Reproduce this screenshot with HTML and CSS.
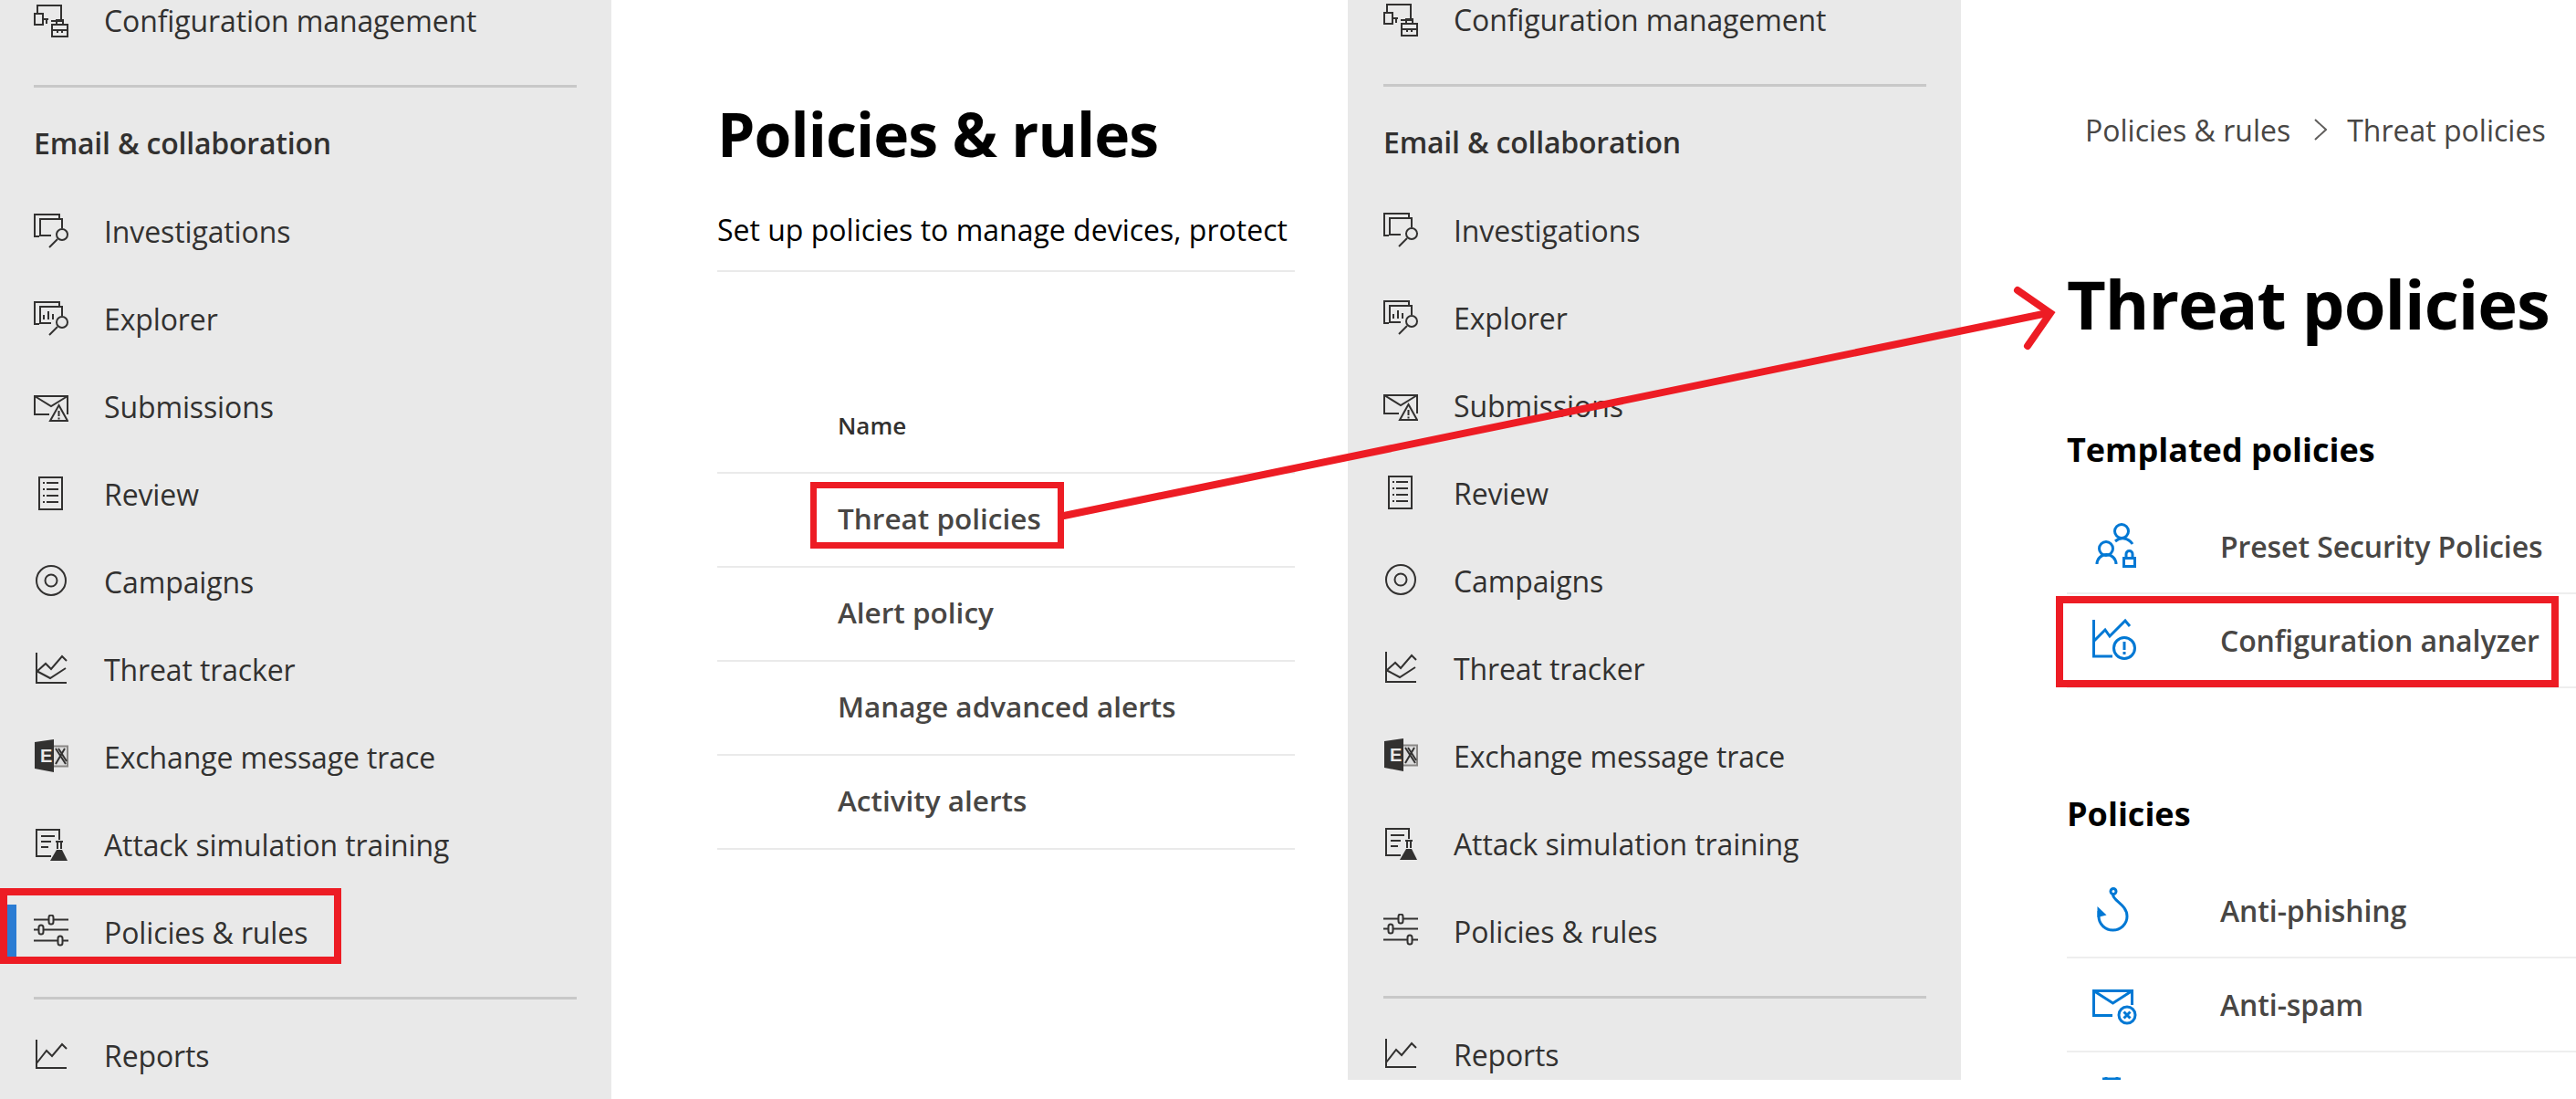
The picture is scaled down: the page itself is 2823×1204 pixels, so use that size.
FILE: index.html
```html
<!DOCTYPE html>
<html lang="en">
  <head>
    <meta charset="UTF-8" />
    <title>Policies &amp; rules - Threat policies</title>
    <link rel="stylesheet" href="styles.css">
  </head>
  <body>
    <!-- shared nav icons -->
    <svg class="icon-defs" aria-hidden="true">
      <symbol id="i-config" viewBox="0 0 38 40">
        <path d="M4 11V3h26v17H19" />
        <path d="M1 12h9v12H1zM10 18h6M14 18v5" />
        <path d="M20 24h17v13H20zM25 24v-5h7v5M20 30h17M26 30v3M31 30v3" />
      </symbol>
      <symbol id="i-investigations" viewBox="0 0 38 40">
        <path d="M6 25H1V1h27v5" />
        <path d="M19 24H7V6h24v10" />
        <circle cx="31" cy="23" r="6" />
        <path d="M26 28l-9 9" />
      </symbol>
      <symbol id="i-explorer" viewBox="0 0 38 40">
        <path d="M6 25H1V1h27v5" />
        <path d="M19 24H7V6h24v10" />
        <path d="M11 20v-5M16 20v-9M21 20v-6" />
        <circle cx="31" cy="23" r="6" />
        <path d="M26 28l-9 9" />
      </symbol>
      <symbol id="i-submissions" viewBox="0 0 38 40">
        <path d="M17 28H1V8h36v20" />
        <path d="M1 8l18 11L37 8" />
        <path class="knockout" d="M27.5 18L37 35H18z" />
        <path d="M27.5 24v6M27.5 31.500v2" />
      </symbol>
      <symbol id="i-review" viewBox="0 0 38 40">
        <path d="M6 1h25v35H6z" />
        <path d="M10 7h2M14 7h13M10 14h2M14 14h13M10 21h2M14 21h13M10 28h2M14 28h13" />
      </symbol>
      <symbol id="i-campaigns" viewBox="0 0 38 40">
        <circle cx="19" cy="18" r="16" />
        <circle cx="19" cy="18" r="6.500" />
      </symbol>
      <symbol id="i-tracker" viewBox="0 0 38 40">
        <path d="M3 1v33h33" />
        <path d="M3 22l10-9 6 6L31 5l5 5" />
        <path d="M3 21l15 8 17-11" />
      </symbol>
      <symbol id="i-exchange" viewBox="0 0 38 40">
        <path class="box" d="M21 7.500h16v22H21z" />
        <path d="M24 10l11 17M34 10L24 27M27 10l9 14" />
        <path class="solid" d="M1 3l21-3v36l-21-4z" />
      </symbol>
      <symbol id="i-attack" viewBox="0 0 38 40">
        <path d="M19 32H3V3h25v11" />
        <path d="M8 10h15M8 16h11M8 22h8" />
        <path d="M24 16h8M26 16v8M30 16v8" />
        <path class="solid" d="M25 25h6l6 12H18z" />
      </symbol>
      <symbol id="i-policies" viewBox="0 0 38 40">
        <path d="M0 5.500h38M0 16.500h38M0 28.500h38" />
        <rect class="knockout" x="16.500" y="0.500" width="5" height="10" rx="2.500" />
        <rect class="knockout" x="5.500" y="11.500" width="5" height="10" rx="2.500" />
        <rect class="knockout" x="26.500" y="23.500" width="5" height="10" rx="2.500" />
      </symbol>
      <symbol id="i-reports" viewBox="0 0 38 40">
        <path d="M3 2v31h33" />
        <path d="M3 28l11-14 6 6L31 7l5 5" />
      </symbol>
    </svg>

    <div class="page">
      <!-- first shot -->
      <div class="shot shot-first">
        <nav class="sidebar">
          <div class="nav-row nav-row-top"><svg class="nav-icon"><use href="#i-config" /></svg>Configuration management</div>
          <div class="nav-divider"></div>
          <div class="nav-section">Email &amp; collaboration</div>
          <div class="nav-row"><svg class="nav-icon"><use href="#i-investigations" /></svg>Investigations</div>
          <div class="nav-row"><svg class="nav-icon"><use href="#i-explorer" /></svg>Explorer</div>
          <div class="nav-row"><svg class="nav-icon"><use href="#i-submissions" /></svg>Submissions</div>
          <div class="nav-row"><svg class="nav-icon"><use href="#i-review" /></svg>Review</div>
          <div class="nav-row"><svg class="nav-icon"><use href="#i-campaigns" /></svg>Campaigns</div>
          <div class="nav-row"><svg class="nav-icon"><use href="#i-tracker" /></svg>Threat tracker</div>
          <div class="nav-row"><svg class="nav-icon"><use href="#i-exchange" /><text class="exchange-e" x="7" y="25">E</text></svg>Exchange message trace</div>
          <div class="nav-row"><svg class="nav-icon"><use href="#i-attack" /></svg>Attack simulation training</div>
          <div class="nav-row nav-row-active"><svg class="nav-icon"><use href="#i-policies" /></svg>Policies &amp; rules</div>
          <div class="nav-divider nav-divider-low"></div>
          <div class="nav-row nav-row-last"><svg class="nav-icon"><use href="#i-reports" /></svg>Reports</div>
        </nav>
        <main class="rules">
          <h1 class="rules-title">Policies &amp; rules</h1>
          <p class="rules-desc">Set up policies to manage devices, protect</p>
          <div class="rules-head">Name</div>
          <div class="rules-row">Threat policies</div>
          <div class="rules-row">Alert policy</div>
          <div class="rules-row">Manage advanced alerts</div>
          <div class="rules-row">Activity alerts</div>
        </main>
      </div>

      <!-- second shot -->
      <div class="shot shot-second">
        <nav class="sidebar">
          <div class="nav-row nav-row-top"><svg class="nav-icon"><use href="#i-config" /></svg>Configuration management</div>
          <div class="nav-divider"></div>
          <div class="nav-section">Email &amp; collaboration</div>
          <div class="nav-row"><svg class="nav-icon"><use href="#i-investigations" /></svg>Investigations</div>
          <div class="nav-row"><svg class="nav-icon"><use href="#i-explorer" /></svg>Explorer</div>
          <div class="nav-row"><svg class="nav-icon"><use href="#i-submissions" /></svg>Submissions</div>
          <div class="nav-row"><svg class="nav-icon"><use href="#i-review" /></svg>Review</div>
          <div class="nav-row"><svg class="nav-icon"><use href="#i-campaigns" /></svg>Campaigns</div>
          <div class="nav-row"><svg class="nav-icon"><use href="#i-tracker" /></svg>Threat tracker</div>
          <div class="nav-row"><svg class="nav-icon"><use href="#i-exchange" /><text class="exchange-e" x="7" y="25">E</text></svg>Exchange message trace</div>
          <div class="nav-row"><svg class="nav-icon"><use href="#i-attack" /></svg>Attack simulation training</div>
          <div class="nav-row"><svg class="nav-icon"><use href="#i-policies" /></svg>Policies &amp; rules</div>
          <div class="nav-divider nav-divider-low"></div>
          <div class="nav-row nav-row-last"><svg class="nav-icon"><use href="#i-reports" /></svg>Reports</div>
        </nav>
        <main class="threats">
          <div class="crumbs">
            <span>Policies &amp; rules</span>
            <svg class="crumb-sep" viewBox="0 0 14 24"><path d="M1 1l12 11L1 23" /></svg>
            <span>Threat policies</span>
          </div>
          <h1 class="threats-title">Threat policies</h1>

          <h2 class="group-title">Templated policies</h2>
          <div class="policy-row">
            <svg class="policy-icon" viewBox="0 0 50 52">
              <circle cx="32" cy="9" r="7.500" />
              <path d="M25 20c6-5 14-4 19 3" />
              <circle cx="15" cy="28" r="7.500" />
              <path d="M5 45a10.500 10.500 0 0 1 21 0" />
              <path d="M34.500 38.500h12v9h-12zM37 38v-4a3.500 3.500 0 0 1 7 0v4" />
            </svg>
            Preset Security Policies
          </div>
          <div class="policy-row">
            <svg class="policy-icon" viewBox="0 0 50 52">
              <path d="M1.500 3v40H22" />
              <path d="M2 26l12-12 5 7L36 4l5 6" />
              <circle cx="35" cy="34" r="11.500" />
              <path d="M35 27v9M35 38v3" />
            </svg>
            Configuration analyzer
          </div>

          <h2 class="group-title group-title-policies">Policies</h2>
          <div class="policy-row">
            <svg class="policy-icon" viewBox="0 0 50 52">
              <circle cx="23" cy="4.500" r="3" />
              <path d="M22.500 8c0 7 15.500 11 15.500 24a15.500 15 0 0 1-31 0v-6" />
              <path class="fill" d="M5.500 21v12l10-2.500z" />
            </svg>
            Anti-phishing
          </div>
          <div class="policy-row">
            <svg class="policy-icon" viewBox="0 0 50 52">
              <path d="M22 37.500H1.500v-27h42V26" />
              <path d="M1.500 10.500l21 13.500 21-13.500" />
              <circle class="blank" cx="38" cy="37" r="9" />
              <path d="M34.500 33.500l7 7M41.500 33.500l-7 7" />
            </svg>
            Anti-spam
          </div>
          <div class="policy-row">
            <svg class="policy-icon" viewBox="0 0 50 52">
              <path d="M11 4h20M15 2v3M27 2v3" />
            </svg>
          </div>
        </main>
      </div>

      <!-- red annotations drawn over the shots -->
      <div class="mark mark-nav"></div>
      <div class="mark mark-threat"></div>
      <div class="mark mark-analyzer"></div>
      <svg class="arrow" viewBox="0 0 2823 1204">
        <path d="M1166 565L2244 343" />
        <path d="M2211 318l36 25-25 36" />
      </svg>
    </div>
  </body>
</html>
```

FILE: styles.css
```css
html,
body {
  margin: 0;
  background: #ffffff;
}
.icon-defs {
  position: absolute;
  width: 0;
  height: 0;
}
.page {
  position: relative;
  width: 2823px;
  height: 1204px;
  overflow: hidden;
  display: flex;
  font-family: "Open Sans", "Noto Sans", sans-serif;
  color: #323130;
}
.shot {
  display: flex;
  height: 1183px;
  overflow: hidden;
}
.shot-first {
  width: 1477px;
  height: 1204px;
}
.shot-second {
  width: 1346px;
}

/* sidebar */
.sidebar {
  box-sizing: border-box;
  width: 670px;
  flex: none;
  background: #e9e9e9;
  padding-left: 37px;
  padding-right: 38px;
}
.shot-second .sidebar {
  width: 672px;
  padding-left: 39px;
  padding-right: 38px;
  margin-top: -1px;
}
.nav-row {
  box-sizing: border-box;
  display: flex;
  align-items: center;
  height: 96px;
  padding-bottom: 2px;
  font-size: 32px;
  letter-spacing: -0.12px;
  white-space: nowrap;
}
.nav-row-top {
  margin-top: -25px;
}
.nav-row-active {
  position: relative;
}
.nav-row-active::before {
  content: "";
  position: absolute;
  left: -29px;
  top: 17px;
  width: 10px;
  height: 58px;
  background: #2b7cd3;
}
.nav-icon {
  flex: none;
  width: 38px;
  height: 40px;
  margin-top: 2px;
  margin-right: 39px;
  fill: none;
  stroke: #323130;
  stroke-width: 2;
  overflow: visible;
}
.knockout {
  fill: #e9e9e9;
}
.solid {
  fill: #323130;
  stroke: none;
}
.box {
  fill: #dddddd;
  stroke: #8a8886;
}
.exchange-e {
  fill: #e9e9e9;
  stroke: none;
  font-family: "Liberation Sans", sans-serif;
  font-weight: 700;
  font-size: 20px;
  letter-spacing: 0;
}
.nav-divider {
  height: 3px;
  margin-top: 22px;
  background: #c8c8c8;
}
.nav-section {
  display: flex;
  align-items: center;
  height: 48px;
  margin-top: 36px;
  margin-bottom: 26px;
  font-size: 32px;
  font-weight: 600;
  letter-spacing: -0.2px;
}
.nav-row-last {
  margin-top: 14px;
}

/* first page content */
.rules {
  box-sizing: border-box;
  width: 633px;
  flex: none;
  margin-left: 116px;
  overflow: hidden;
}
.rules-title {
  margin: 100px 0 0;
  font-size: 66px;
  line-height: 92px;
  font-weight: 700;
  letter-spacing: -0.9px;
  color: #000000;
  white-space: nowrap;
}
.rules-desc {
  box-sizing: border-box;
  height: 106px;
  margin: 0;
  padding-top: 38px;
  border-bottom: 2px solid #eaeaea;
  font-size: 32px;
  line-height: 44px;
  color: #000000;
  white-space: nowrap;
}
.rules-head {
  box-sizing: border-box;
  height: 221px;
  padding-left: 132px;
  padding-top: 148px;
  border-bottom: 2px solid #eaeaea;
  font-size: 26px;
  line-height: 40px;
  font-weight: 600;
}
.rules-row {
  box-sizing: border-box;
  display: flex;
  align-items: center;
  height: 103px;
  padding-left: 132px;
  padding-bottom: 5px;
  border-bottom: 2px solid #eaeaea;
  font-size: 31.5px;
  font-weight: 600;
  color: #484644;
  white-space: nowrap;
}

/* second page content */
.threats {
  box-sizing: border-box;
  width: 674px;
  flex: none;
  padding-left: 116px;
}
.crumbs {
  display: flex;
  align-items: center;
  margin-top: 122px;
  padding-left: 20px;
  height: 40px;
  font-size: 32px;
  color: #484644;
  white-space: nowrap;
}
.crumb-sep {
  width: 14px;
  height: 24px;
  margin: 0 22px 0 26px;
  fill: none;
  stroke: #605e5c;
  stroke-width: 2;
}
.threats-title {
  margin: 121px 0 0;
  font-size: 74px;
  line-height: 100px;
  font-weight: 700;
  letter-spacing: -1px;
  color: #000000;
  white-space: nowrap;
}
.group-title {
  margin: 86px 0 31px;
  height: 48px;
  font-size: 36px;
  line-height: 48px;
  font-weight: 700;
  color: #000000;
  white-space: nowrap;
}
.group-title-policies {
  margin-top: 114px;
}
.policy-row {
  box-sizing: border-box;
  display: flex;
  align-items: center;
  height: 103px;
  padding-left: 28px;
  border-bottom: 2px solid #eeeeee;
  font-size: 32px;
  font-weight: 600;
  letter-spacing: -0.1px;
  color: #484644;
  white-space: nowrap;
}
.policy-icon {
  flex: none;
  width: 50px;
  height: 52px;
  margin-right: 90px;
  fill: none;
  stroke: #0078d4;
  stroke-width: 3;
}
.policy-icon .fill {
  fill: #0078d4;
  stroke: none;
}
.policy-icon .blank {
  fill: #ffffff;
}

/* annotations */
.mark {
  position: absolute;
  box-sizing: border-box;
  border: 8px solid #ed1c24;
}
.mark-nav {
  left: 0;
  top: 973px;
  width: 374px;
  height: 83px;
}
.mark-threat {
  left: 888px;
  top: 528px;
  width: 278px;
  height: 73px;
  border-width: 7px;
}
.mark-analyzer {
  left: 2253px;
  top: 653px;
  width: 551px;
  height: 100px;
}
.arrow {
  position: absolute;
  left: 0;
  top: 0;
  width: 2823px;
  height: 1204px;
  fill: none;
  stroke: #ed1c24;
  stroke-width: 8;
  stroke-linecap: round;
  stroke-linejoin: miter;
  pointer-events: none;
}
```
